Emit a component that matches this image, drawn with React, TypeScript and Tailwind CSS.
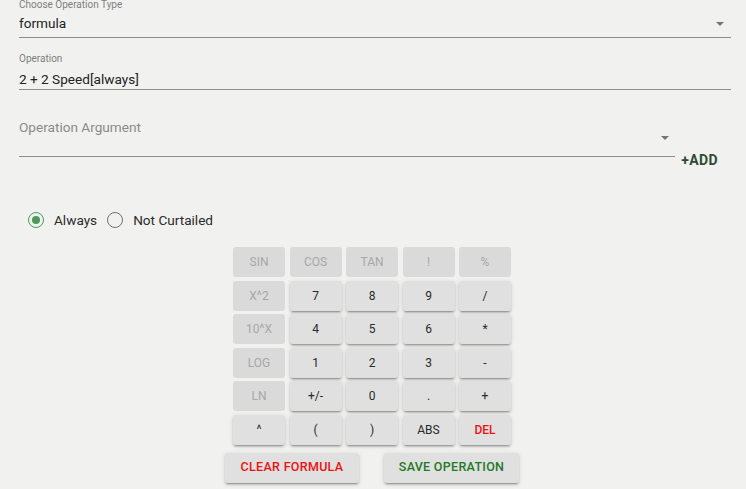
import React from 'react';

type Key = { label: string; disabled?: boolean; danger?: boolean };

const keys: Key[] = [
  { label: 'SIN', disabled: true },
  { label: 'COS', disabled: true },
  { label: 'TAN', disabled: true },
  { label: '!', disabled: true },
  { label: '%', disabled: true },
  { label: 'X^2', disabled: true },
  { label: '7' },
  { label: '8' },
  { label: '9' },
  { label: '/' },
  { label: '10^X', disabled: true },
  { label: '4' },
  { label: '5' },
  { label: '6' },
  { label: '*' },
  { label: 'LOG', disabled: true },
  { label: '1' },
  { label: '2' },
  { label: '3' },
  { label: '-' },
  { label: 'LN', disabled: true },
  { label: '+/-' },
  { label: '0' },
  { label: '.' },
  { label: '+' },
  { label: '^' },
  { label: '(' },
  { label: ')' },
  { label: 'ABS' },
  { label: 'DEL', danger: true },
];

const raised =
  'shadow-[0px_3px_1px_-2px_rgba(0,0,0,0.2),0px_2px_2px_0px_rgba(0,0,0,0.14),0px_1px_5px_0px_rgba(0,0,0,0.12)]';

const DropArrow = () => (
  <svg width="8" height="4" viewBox="0 0 8 4" aria-hidden="true">
    <path d="M0 0 L8 0 L4 4z" fill="#757575" />
  </svg>
);

const Radio = ({ checked, label }: { checked?: boolean; label: string }) => (
  <label className="flex items-center mr-[10px]">
    <span
      className={`flex h-[16px] w-[16px] items-center justify-center rounded-full border-[1.8px] ${
        checked ? 'border-[#4e9a5c]' : 'border-[#737373]'
      }`}
    >
      {checked ? <span className="h-[8px] w-[8px] rounded-full bg-[#4e9a5c]" /> : null}
    </span>
    <span className="ml-[10px] text-[13.6px] leading-[19px] text-[#2b2b2b]">{label}</span>
  </label>
);

export default function App() {
  return (
    <div
      className="h-[489px] w-[746px] overflow-hidden bg-[#f1f2f0] pl-[19px] pr-[15px]"
      style={{ fontFamily: 'Roboto, "Liberation Sans", sans-serif' }}
    >
      {/* Operation type select */}
      <div className="relative border-b border-[#8d8e8c]">
        <div className="text-[10px] leading-[10px] text-[#7e7f7d]">Choose Operation Type</div>
        <div className="mt-[4px] pb-[4px] text-[13.6px] leading-[19px] text-[#222222]">formula</div>
        <div className="absolute right-[7px] top-[22px] flex">
          <DropArrow />
        </div>
      </div>

      {/* Operation */}
      <div className="mt-[16px] border-b border-[#8d8e8c]">
        <div className="text-[10px] leading-[10px] text-[#7e7f7d]">Operation</div>
        <div className="mt-[6px] text-[13.6px] leading-[19px] text-[#222222]">2 + 2 Speed[always]</div>
      </div>

      {/* Operation argument */}
      <div className="flex h-[67px] items-start">
        <div className="relative h-[67px] flex-1 border-b border-[#8d8e8c] pt-[28px]">
          <div className="text-[13.6px] leading-[19px] text-[#8a8a8a]">Operation Argument</div>
          <div className="absolute right-[6px] top-[46px] flex">
            <DropArrow />
          </div>
        </div>
        <button
          type="button"
          className="ml-[6px] mr-[13px] mt-[62px] text-[14px] font-bold leading-[16px] tracking-[0.4px] text-[#2f4b34]"
        >
          +ADD
        </button>
      </div>

      {/* Radios */}
      <div className="mt-[53px] ml-[9px] flex h-[20px] items-center">
        <Radio checked label="Always" />
        <Radio label="Not Curtailed" />
      </div>

      {/* Calculator */}
      <div className="mt-[17px] ml-[214px] grid w-[278px] grid-cols-5 gap-x-[4.5px] gap-y-[3.5px]">
        {keys.map((key) => (
          <button
            key={key.label}
            type="button"
            className={`flex h-[30px] items-center justify-center rounded-[3px] text-[12px] ${
              key.disabled
                ? 'bg-[#dadada] text-[#a8a8a8]'
                : `bg-[#e0e0e0] ${raised} ${key.danger ? 'font-medium text-[#ee1111]' : 'text-[#2a2a2a]'}`
            }`}
          >
            {key.label}
          </button>
        ))}
      </div>

      {/* Actions */}
      <div className="mt-[8px] ml-[206px] flex gap-[25px]">
        <button
          type="button"
          className={`h-[30px] w-[134px] rounded-[3px] bg-[#e0e0e0] text-[12.5px] font-medium tracking-[0.3px] text-[#ee1111] ${raised}`}
        >
          CLEAR FORMULA
        </button>
        <button
          type="button"
          className={`h-[30px] w-[135px] rounded-[3px] bg-[#e0e0e0] text-[12.5px] font-medium tracking-[0.3px] text-[#1f7a24] ${raised}`}
        >
          SAVE OPERATION
        </button>
      </div>
    </div>
  );
}
